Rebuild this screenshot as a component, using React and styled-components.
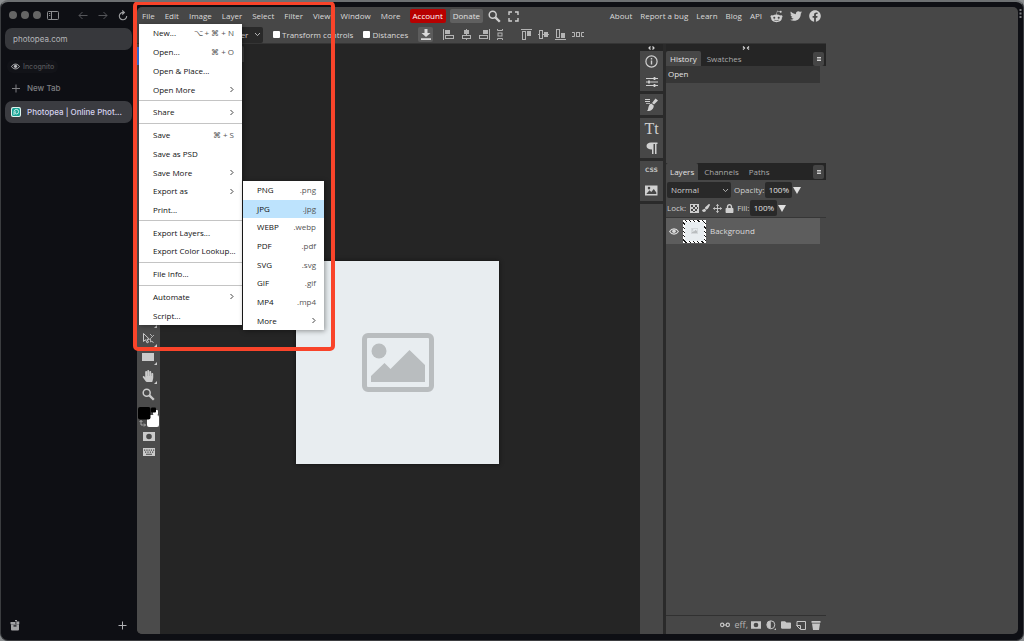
import React from 'react';
import styled, { createGlobalStyle } from 'styled-components';
import { FaTwitter, FaFacebook, FaRedditAlien, FaHandPaper, FaLock, FaFolder, FaPaintBrush } from 'react-icons/fa';


const GlobalStyle = createGlobalStyle`
    * { box-sizing: border-box; }
    html, body { margin: 0; background: #8b8e90; }
    body { font: 8px/12px "Open Sans", "Noto Sans", sans-serif; color: #dadada; }
    button, input, select { font: inherit; color: inherit; margin: 0; padding: 0; border: 0; background: none; }
    a { color: inherit; text-decoration: none; }
    ul { list-style: none; margin: 0; padding: 0; }
    svg { display: block; flex: none; }
`;


// BROWSER

const Browser = styled.div`
    position: relative;
    display: flex;
    height: 100vh;
    min-height: 500px;
    padding: 5px 5px 6px 0;
    border: 1px solid #3b3d40;
    border-top: 2px solid #6d7072;
    border-radius: 8px;
    background: #0e0f14;
    overflow: hidden;
`;

const Sidebar = styled.aside`
    display: flex;
    flex-direction: column;
    flex: none;
    width: 136px;
    padding: 0 5px 0 4px;
    font: 8px/12px Inter, "Liberation Sans", sans-serif;
    color: #8b8c8f;
`;

const WindowBar = styled.div`
    display: flex;
    align-items: center;
    height: 16px;
    margin-bottom: 5px;
    padding-left: 4px;
`;

const Lights = styled.div`
    display: flex;
    gap: 4px;
    margin-right: 6px;

    i {
        width: 8px;
        height: 8px;
        border-radius: 50%;
        background: #656565;
    }
`;

const IconButton = styled.button`
    display: grid;
    place-items: center;
    flex: none;
    width: 12px;
    height: 12px;
    margin-left: ${(p) => p.$ml || 0}px;
    color: ${(p) => p.$color || 'inherit'};
`;

const Address = styled.input`
    width: 100%;
    height: 22px;
    padding: 0 8px;
    border-radius: 7px;
    background: #37383c;
    color: #b4b5b8;
`;

const Incognito = styled.div`
    display: flex;
    align-items: center;
    align-self: flex-start;
    gap: 3px;
    height: 13px;
    margin: 10px 0 0 2px;
    padding: 0 4px;
    border-radius: 6px;
    background: #121318;
    color: #55565a;
    font-size: 7px;
    font-weight: 500;
`;

const TabButton = styled.button`
    display: flex;
    align-items: center;
    gap: 6px;
    height: 22px;
    margin-top: ${(p) => (p.$active ? 2 : 4)}px;
    padding: 0 6px;
    border-radius: 7px;
    background: ${(p) => (p.$active ? '#3b3c41' : 'none')};
    color: ${(p) => (p.$active ? '#d5d2ee' : '#7e7f82')};
    font-weight: 500;
    text-align: left;
    white-space: nowrap;

    > svg { min-width: 10px; }
`;

const SidebarFoot = styled.div`
    display: flex;
    justify-content: space-between;
    margin-top: auto;
    padding: 0 4px 3px 4px;
`;

const Tint = styled.span`
    color: ${(p) => p.$color};
`;

const WindowDots = styled.button`
    position: absolute;
    top: 7px;
    right: 1px;
    color: #7b7c7f;
`;


// EDITOR SHELL

const Editor = styled.div`
    position: relative;
    display: flex;
    flex: 1;
    border-radius: 5px;
    background: #474747;
`;

const Workspace = styled.main`
    display: flex;
    flex-direction: column;
    flex: 1;
    min-width: 0;
`;

const AdColumn = styled.div`
    flex: none;
    width: 192px;
`;

const MenuBar = styled.nav`
    display: flex;
    align-items: center;
    height: 18px;
    padding: 0 5px;
    white-space: nowrap;
`;

const MenuGroup = styled.div`
    display: flex;
    gap: 10px;
    margin-right: 9px;
`;

const LinkGroup = styled.div`
    display: flex;
    gap: 8px;
    margin: 0 8px 0 auto;
`;

const Pill = styled.button`
    height: 14px;
    margin-right: 4px;
    padding: 0 3px;
    border-radius: 2px;
    background: ${(p) => p.$bg};
    color: ${(p) => p.$color};
`;

const IconSet = styled.div`
    display: flex;
    align-items: center;
    gap: ${(p) => p.$gap}px;
    margin-left: ${(p) => p.$ml || 0}px;
    color: ${(p) => (p.$dim ? '#b4b4b4' : '#cfcfcf')};
`;

const OptionsBar = styled.div`
    display: flex;
    align-items: center;
    height: 19px;
    padding: 1px 5px 0 66px;
    border-bottom: 1px solid #353535;
`;

const SelectBox = styled.span`
    display: grid;
    align-items: center;
    width: ${(p) => p.$w}px;
    height: 16px;
    border-radius: 2px;
    background: #292929;

    select, svg { grid-area: 1 / 1; }
    svg { justify-self: end; margin-right: 2px; pointer-events: none; }
    select { width: 100%; padding-left: ${(p) => p.$pl || 4}px; appearance: none; }
`;

const Check = styled.label`
    display: flex;
    align-items: center;
    gap: 2px;
    margin-left: 10px;
    white-space: nowrap;

    input {
        width: 7px;
        height: 7px;
        border-radius: 1px;
        background: #fff;
        appearance: none;
    }
`;

const RaisedButton = styled.button`
    display: grid;
    place-items: center;
    width: 15px;
    height: 15px;
    margin: 0 10px;
    border-radius: 2px;
    background: #5c5c5c;
`;

const Body = styled.div`
    display: flex;
    flex: 1;
    min-height: 0;
`;


// TOOLBAR

const Toolbar = styled.div`
    display: flex;
    flex-direction: column;
    flex: none;
    width: 23px;
    padding-top: 3px;
    background: #4b4b4b;
    border-bottom-left-radius: 5px;
`;

const ToolGroup = styled.div`
    display: grid;
    grid-auto-rows: 1fr;
    height: ${(p) => p.$h}px;
`;

const Tool = styled.button`
    display: grid;
    place-items: center;
    width: 100%;
    height: ${(p) => (p.$h ? `${p.$h}px` : 'auto')};
    background: ${(p) => (p.$active ? '#3474e0' : 'none')};
    color: #cbcbcb;
`;


// CANVAS

const CanvasArea = styled.section`
    flex: 1;
    min-width: 0;
    background: #252525;
`;

const DocTabs = styled.div`
    display: flex;
    height: 18px;
`;

const DocTab = styled.button`
    width: 84px;
    margin: 2px 0 0;
    border-radius: 0 2px 0 0;
    background: #3c3c3c;
`;

const Stage = styled.div`
    display: flex;
    justify-content: center;
    padding: 199px 5px 0 0;
`;

const Sheet = styled.div`
    display: grid;
    place-items: center;
    width: 203px;
    height: 203px;
    background: #e8edf0;
    box-shadow: 0 0 4px #111;
`;


// PANELS

const Dock = styled.section`
    display: flex;
    flex-direction: column;
    flex: none;
    width: ${(p) => p.$w}px;
    border-right: ${(p) => (p.$edge ? '3px solid #2a2a2a' : 0)};
`;

const DockHandle = styled.div`
    display: grid;
    place-items: center;
    height: 7px;
    background: #252525;
`;

const DockGroup = styled.div`
    display: flex;
    flex-direction: column;
    align-items: center;
    justify-content: space-around;
    height: ${(p) => (p.$h ? `${p.$h}px` : 'auto')};
    flex: ${(p) => (p.$h ? 'none' : 1)};
    border-bottom: ${(p) => (p.$h ? '3px solid #2a2a2a' : 0)};
    color: #d0d0d0;
`;

const GlyphText = styled.span`
    font: 16px/16px "Liberation Serif", serif;
`;

const CssText = styled.span`
    font: bold 6px/8px "DejaVu Sans", sans-serif;
    color: #bdbdbd;
`;

const Panel = styled.div`
    display: flex;
    flex-direction: column;
    flex: ${(p) => (p.$h ? 'none' : 1)};
    height: ${(p) => (p.$h ? `${p.$h}px` : 'auto')};
    min-height: 0;
`;

const PanelTabs = styled.div`
    display: flex;
    align-items: stretch;
    flex: none;
    height: ${(p) => p.$h}px;
    margin-bottom: ${(p) => p.$mb || 0}px;
    padding-right: 2px;
    background: #252525;
`;

const PanelTab = styled.button`
    padding: 0 4px;
    margin-right: 2px;
    border-radius: 2px 2px 0 0;
    background: ${(p) => (p.$active ? '#474747' : 'none')};
    color: ${(p) => (p.$active ? '#e4e4e4' : '#a9a9a9')};
`;

const PanelMenu = styled.button`
    display: grid;
    place-items: center;
    align-self: center;
    width: 11px;
    height: 14px;
    margin-left: auto;
    border-radius: 2px;
    background: #454545;
    color: #ddd;
`;

const HistoryRow = styled.div`
    height: 17px;
    margin-right: 6px;
    padding: 2px;
    background: #363636;
    color: #e4e4e4;
`;

const Controls = styled.div`
    display: flex;
    align-items: center;
    gap: 3px;
    height: 18px;
    padding-left: 1px;
    color: #cfcfcf;
`;

const Percent = styled.input`
    width: 27px;
    height: 16px;
    margin-left: -2px;
    padding-bottom: 1px;
    border-radius: 2px;
    background: #292929;
    color: #e4e4e4;
    text-align: center;
`;

const Drop = styled.button`
    width: 7px;
    margin-left: -2px;
    border: 4px solid transparent;
    border-top: 7px solid #e0e0e0;
    border-bottom: 0;
`;

const LayerList = styled.div`
    border-top: 1px solid #363636;
`;

const LayerRow = styled.div`
    display: flex;
    align-items: center;
    gap: 4px;
    height: 26px;
    margin-right: 6px;
    padding-left: 3px;
    background: #5d5d5d;
    color: #dcdcdc;
`;

const Thumb = styled.span`
    display: grid;
    place-items: center;
    width: 23px;
    height: 23px;
    border: 2px solid transparent;
    background:
        linear-gradient(#e8edf0, #e8edf0) padding-box,
        repeating-linear-gradient(45deg, #fff 0 2px, #151515 2px 3px) border-box;
`;

const LayerFoot = styled.div`
    display: flex;
    align-items: center;
    justify-content: flex-end;
    gap: 5px;
    height: 19px;
    margin-top: auto;
    padding-right: 5px;
    border-top: 1px solid #313131;
    color: #c6c6c6;
`;

const EffText = styled.span`
    margin-right: -2px;
    font-size: 9px;
    color: #b5b5b5;
`;


// FILE MENU

const MenuList = styled.ul`
    position: absolute;
    z-index: 2;
    display: flex;
    flex-direction: column;
    background: #fff;
    color: #111;
    box-shadow: 1px 1px 5px rgba(0, 0, 0, 0.4);
`;

const FileMenu = styled(MenuList)`
    left: 2px;
    top: 17px;
    width: 103px;
    height: 301px;
`;

const ExportMenu = styled(MenuList)`
    left: 104px;
    top: -1px;
    width: 81px;
    height: 149px;
`;

const MenuRow = styled.li`
    position: relative;
    display: flex;
    flex: 1;
    background: ${(p) => (p.$active ? '#bde3fd' : 'none')};

    > button {
        display: flex;
        flex: 1;
        align-items: center;
        justify-content: space-between;
        padding: 0 8px 0 14px;
        white-space: nowrap;
    }

    kbd { font: inherit; color: #555; }
`;

const Divider = styled.li`
    height: 1px;
    margin: 1px 0 2px;
    background: #c4c4c4;
`;

const Highlight = styled.div`
    position: absolute;
    z-index: 3;
    left: 132px;
    top: -1px;
    width: 202px;
    height: 350px;
    border: 4px solid #f9442a;
    border-radius: 5px;
    pointer-events: none;
`;


// ICONS

const Svg = ({ w = 12, h = 12, box, fill, children }) => (
    <svg
        width={w}
        height={h}
        viewBox={box || `0 0 ${w} ${h}`}
        fill={fill ? 'currentColor' : 'none'}
        stroke={fill ? 'none' : 'currentColor'}
        aria-hidden="true"
    >
        {children}
    </svg>
);

const Chevron = () => <Svg w={5} h={7}><path d="M1.5 1l2.5 2.5L1.5 6" strokeWidth="0.8" /></Svg>;
const ChevronDown = () => <Svg w={7} h={5}><path d="M1 1l2.5 2.6L6 1" strokeWidth="0.8" /></Svg>;
const Plus = () => <Svg w={9} h={9}><path d="M4.5 0.5v8M0.5 4.5h8" /></Svg>;
const Lines = () => <Svg w={4} h={4}><path d="M0 0.5h4M0 2h4M0 3.5h4" strokeWidth="0.9" /></Svg>;

const Eye = ({ w = 10 }) => (
    <Svg w={w} h={7} box="0 0 10 7">
        <path d="M0.6 3.5C2.8 0 7.2 0 9.4 3.5C7.2 7 2.8 7 0.6 3.5z" strokeWidth="1.1" />
        <circle cx="5" cy="3.3" r="1.8" fill="currentColor" stroke="none" />
    </Svg>
);

const Magnifier = () => (
    <Svg w={13} h={13}>
        <circle cx="4.7" cy="4.7" r="3.5" strokeWidth="1.5" />
        <path d="M7.4 7.4l4.4 4.4" strokeWidth="2.3" />
    </Svg>
);

const Picture = ({ w, h }) => (
    <Svg w={w} h={h} box="0 0 72 59">
        <rect x="2.5" y="2.5" width="67" height="54" rx="3.5" strokeWidth="5" />
        <circle cx="17" cy="18" r="7.5" fill="currentColor" stroke="none" />
        <path d="M9 49V43L22.5 30L28.5 36L47.5 17L63 32V49z" fill="currentColor" stroke="none" />
    </Svg>
);

const Mask = ({ w = 12, h = 9 }) => (
    <Svg w={w} h={h} box="0 0 12 9" fill>
        <path fillRule="evenodd" d="M0 0H12V9H0zM6 1.7A2.8 2.8 0 1 0 6 7.3A2.8 2.8 0 1 0 6 1.7z" />
    </Svg>
);

const alignShapes = [
    [11, <><path d="M0.5 0v11" /><rect x="2.5" y="6.5" width="8" height="3" /><path d="M2 3h5" strokeWidth="4" /></>],
    [11, <><path d="M5.5 0v11" /><rect x="1.5" y="6.5" width="8" height="3" fill="#474747" /><path d="M3 3h5" strokeWidth="4" /></>],
    [11, <><path d="M10.5 0v11" /><rect x="0.5" y="6.5" width="8" height="3" /><path d="M4 3h5" strokeWidth="4" /></>],
    [6, <><path d="M0.5 0v1.5h5V0M0.5 11V9.5h5V11" /><rect x="1" y="4" width="4" height="3" /></>],
    [11, <><path d="M0 0.5h11" /><rect x="1.5" y="2.5" width="3" height="8" /><path d="M8 2v5" strokeWidth="4" /></>],
    [11, <><path d="M0 5.5h11" /><rect x="1.5" y="1.5" width="3" height="8" fill="#474747" /><path d="M8 3v5" strokeWidth="4" /></>],
    [11, <><path d="M0 10.5h11" /><rect x="1.5" y="0.5" width="3" height="8" /><path d="M8 4v5" strokeWidth="4" /></>],
    [12, <><path d="M0 3.5h2.5v4H0M12 3.5H9.5v4H12" /><rect x="4.5" y="3.5" width="3" height="4" /></>],
];


// DATA

const fileItems = [
    { label: 'New...', keys: '⌥ + ⌘ + N' },
    { label: 'Open...', keys: '⌘ + O' },
    { label: 'Open & Place...' },
    { label: 'Open More', more: true },
    null,
    { label: 'Share', more: true },
    null,
    { label: 'Save', keys: '⌘ + S' },
    { label: 'Save as PSD' },
    { label: 'Save More', more: true },
    { label: 'Export as', more: true, submenu: true },
    { label: 'Print...' },
    null,
    { label: 'Export Layers...' },
    { label: 'Export Color Lookup...' },
    null,
    { label: 'File Info...' },
    null,
    { label: 'Automate', more: true },
    { label: 'Script...' },
];

const formats = ['PNG', 'JPG', 'WEBP', 'PDF', 'SVG', 'GIF', 'MP4'];
const menus = ['File', 'Edit', 'Image', 'Layer', 'Select', 'Filter', 'View', 'Window', 'More'];
const links = ['About', 'Report a bug', 'Learn', 'Blog', 'API'];


const BrowserSidebar = () => (
    <Sidebar>
        <WindowBar>
            <Lights><i /><i /><i /></Lights>
            <IconButton aria-label="Toggle sidebar">
                <Svg w={12} h={9}><rect x="0.5" y="0.5" width="11" height="8" rx="1" /><path d="M4.5 1v7M2 2.5h1.2M2 4.5h1.2" /></Svg>
            </IconButton>
            <IconButton $ml={18} $color="#55565a" aria-label="Back">
                <Svg w={10} h={9}><path d="M9.5 4.5H1M4.5 1L1 4.5L4.5 8" /></Svg>
            </IconButton>
            <IconButton $ml={8} $color="#55565a" aria-label="Forward">
                <Svg w={10} h={9}><path d="M0.5 4.5H9M5.5 1L9 4.5L5.5 8" /></Svg>
            </IconButton>
            <IconButton $ml={8} $color="#a0a1a4" aria-label="Reload">
                <Svg w={10} h={11}><path d="M6 2.5A3.7 3.7 0 1 0 8.7 6M4.2 0.5L6.4 2.5L4.2 4.5" strokeWidth="1.1" /></Svg>
            </IconButton>
        </WindowBar>
        <Address aria-label="Address" defaultValue="photopea.com" />
        <Incognito><Tint $color="#b9babd"><Eye w={9} /></Tint>Incognito</Incognito>
        <TabButton><Plus />New Tab</TabButton>
        <TabButton $active>
            <Svg w={10} h={10}>
                <rect width="10" height="10" rx="2" fill="#dff5f0" stroke="none" />
                <rect x="1" y="1" width="8" height="8" rx="1.5" fill="#18a497" stroke="none" />
                <path d="M3 8V4.8A2.3 2.3 0 1 1 5.2 7A1.2 1.2 0 0 1 5.2 4.6" stroke="#dff5f0" strokeWidth="0.9" />
            </Svg>
            Photopea | Online Phot...
        </TabButton>
        <SidebarFoot>
            <IconButton $color="#a3a4a6" aria-label="Library">
                <Svg w={10} h={11} fill>
                    <path d="M1 4.5h8v5a1 1 0 0 1-1 1H2a1 1 0 0 1-1-1zM0.5 2h5v2.2h-5zM6.3 1.5h3v2.7h-3zM5 0h2v1.2H5z" />
                    <path d="M3.5 5h3v1.8h-3z" fill="#3a3b3f" />
                </Svg>
            </IconButton>
            <IconButton $color="#b0b1b4" aria-label="New tab"><Plus /></IconButton>
        </SidebarFoot>
    </Sidebar>
);


const TopMenu = () => (
    <MenuBar>
        <MenuGroup>
            {menus.map((name) => <button key={name}>{name}</button>)}
        </MenuGroup>
        <Pill $bg="#b70000" $color="#fff">Account</Pill>
        <Pill $bg="#606060" $color="#e0e0e0">Donate</Pill>
        <IconSet $gap={7} $ml={1}>
            <Magnifier />
            <Svg w={11} h={11}><path d="M1 4V1h3M7 1h3v3M10 7v3H7M4 10H1V7" strokeWidth="1.4" /></Svg>
        </IconSet>
        <LinkGroup>
            {links.map((name) => <a key={name} href="#">{name}</a>)}
        </LinkGroup>
        <IconSet $gap={7}>
            <FaRedditAlien size={13} />
            <FaTwitter size={12} />
            <FaFacebook size={12} />
        </IconSet>
    </MenuBar>
);


const ToolOptions = () => (
    <OptionsBar>
        <SelectBox $w={60} $pl={25}>
            <select aria-label="Target" defaultValue="Layer"><option>Layer</option></select>
            <ChevronDown />
        </SelectBox>
        <Check><input type="checkbox" />Transform controls</Check>
        <Check><input type="checkbox" />Distances</Check>
        <RaisedButton aria-label="Download">
            <Svg w={10} h={11} fill><path d="M3.5 0h3v4H9.5L5 8L0.5 4H3.5zM0 9.3h10V11H0z" /></Svg>
        </RaisedButton>
        <IconSet $gap={7} $dim>
            {alignShapes.slice(0, 4).map(([w, shape], i) => <Svg key={i} w={w} h={11}>{shape}</Svg>)}
        </IconSet>
        <IconSet $gap={6} $ml={18} $dim>
            {alignShapes.slice(4).map(([w, shape], i) => <Svg key={i} w={w} h={11}>{shape}</Svg>)}
        </IconSet>
    </OptionsBar>
);


const ToolColumn = () => {
    const corner = <path d="M17 14v3h-3z" fill="currentColor" stroke="none" />;

    return (
        <Toolbar>
            <Tool $active $h={18} aria-label="Move" />
            <ToolGroup $h={246} />
            <ToolGroup $h={93}>
                <Tool aria-label="Type"><Svg w={18} h={18}>{corner}</Svg></Tool>
                <Tool aria-label="Path select">
                    <Svg w={18} h={18}>
                        <path d="M3.5 3.5v8l2-1.8l1.6 3.2l1.4-0.7L7 9.3h2.5z" />
                        <path d="M10 4l2 2M14 5l-3.5 3.5v3.5l1.5-1l1.5 2" strokeWidth="0.8" />
                        {corner}
                    </Svg>
                </Tool>
                <Tool aria-label="Rectangle">
                    <Svg w={18} h={18}><rect x="2" y="5" width="12" height="8" fill="currentColor" stroke="none" />{corner}</Svg>
                </Tool>
                <Tool aria-label="Hand">
                    <Svg w={18} h={18}><FaHandPaper x={2} y={3} size={12} stroke="none" />{corner}</Svg>
                </Tool>
                <Tool aria-label="Zoom"><Magnifier /></Tool>
            </ToolGroup>
            <Tool $h={26} aria-label="Colors">
                <Svg w={21} h={22}>
                    <rect x="9" y="9" width="12" height="12" rx="2" fill="#fff" stroke="none" />
                    <rect x="15" y="4" width="5" height="5" rx="1" fill="#fff" stroke="none" />
                    <rect x="13" y="1.5" width="5" height="5" rx="1" fill="#000" stroke="none" />
                    <rect x="0" y="1" width="12.5" height="12.5" rx="2" fill="#000" stroke="none" />
                    <path d="M3 14.5v4.5h4.5M1.5 16L3 14.5l1.5 1.5M6 17.5l1.5 1.5L6 20.5" strokeWidth="0.7" />
                </Svg>
            </Tool>
            <Tool $h={13} aria-label="Quick mask"><Mask /></Tool>
            <Tool $h={17} aria-label="Keyboard">
                <Svg w={12} h={8} fill>
                    <path fillRule="evenodd" d="M0 0H12V8H0zM1 1.5V2.7H2.3V1.5zM3.3 1.5V2.7H4.6V1.5zM5.6 1.5V2.7H6.8V1.5zM7.8 1.5V2.7H9V1.5zM10 1.5V2.7H11.2V1.5zM2 3.6V4.7H3.2V3.6zM4.4 3.6V4.7H5.6V3.6zM6.8 3.6V4.7H8V3.6zM9 3.6V4.7H10.2V3.6zM3 5.7V6.8H9V5.7z" />
                </Svg>
            </Tool>
        </Toolbar>
    );
};


const IconDock = () => (
    <Dock $w={26} $edge>
        <DockHandle><Svg w={7} h={4}><path d="M2.5 0.5L1 2l1.5 1.5M4.5 0.5L6 2L4.5 3.5" strokeWidth="1.2" /></Svg></DockHandle>
        <DockGroup $h={43}>
            <Svg w={13} h={13}>
                <circle cx="6.5" cy="6.5" r="5.6" strokeWidth="1.2" />
                <path d="M6.5 5.5v4M6.5 3v1.4" strokeWidth="1.4" />
            </Svg>
            <Svg w={12} h={10}><path d="M0 1.5h12M0 5h12M0 8.5h12" /><path d="M8.5 0v3M3 3.5v3M8.5 7v3" strokeWidth="1.8" /></Svg>
        </DockGroup>
        <DockGroup $h={24}>
            <Svg w={13} h={14} fill>
                <path d="M0 1h5v1H0zM0 3h5v1H0zM1 5h4v0.8H1zM10.5 0.5L13 2.5L9 6.5L7 5zM6.2 5.5l2.5 2C9 11 5.5 13.5 2 13C4 11.5 2.5 7 6.2 5.5z" />
            </Svg>
        </DockGroup>
        <DockGroup $h={43}>
            <GlyphText>Tt</GlyphText>
            <Svg w={12} h={13} fill><path d="M5 0.5h6.5V2H10.5v10H9V2H7.5v10H6V7.5C2.5 7.5 0.5 6 0.5 4S2.5 0.5 5 0.5z" /></Svg>
        </DockGroup>
        <DockGroup $h={43}>
            <CssText>CSS</CssText>
            <Svg w={13} h={11} fill>
                <path fillRule="evenodd" d="M0 0.5H12.5V10.5H0zM1.3 9L4.5 5.2L6.3 7L8.8 4L11.3 7.5V9zM4 1.8A1.3 1.3 0 1 0 4 4.4A1.3 1.3 0 1 0 4 1.8z" />
            </Svg>
        </DockGroup>
        <DockGroup />
    </Dock>
);


const Panels = () => (
    <Dock $w={160}>
        <DockHandle><Svg w={8} h={4}><path d="M1 0.5L2.5 2L1 3.5M7 0.5L5.5 2L7 3.5" strokeWidth="1.2" /></Svg></DockHandle>
        <Panel $h={112}>
            <PanelTabs $h={15}>
                <PanelTab $active>History</PanelTab>
                <PanelTab>Swatches</PanelTab>
                <PanelMenu aria-label="History menu"><Lines /></PanelMenu>
            </PanelTabs>
            <HistoryRow>Open</HistoryRow>
        </Panel>
        <Panel>
            <PanelTabs $h={17} $mb={1}>
                <PanelTab $active>Layers</PanelTab>
                <PanelTab>Channels</PanelTab>
                <PanelTab>Paths</PanelTab>
                <PanelMenu aria-label="Layers menu"><Lines /></PanelMenu>
            </PanelTabs>
            <Controls>
                <SelectBox $w={64}>
                    <select aria-label="Blend mode" defaultValue="Normal"><option>Normal</option></select>
                    <ChevronDown />
                </SelectBox>
                <label htmlFor="opacity">Opacity:</label>
                <Percent id="opacity" defaultValue="100%" />
                <Drop aria-label="Opacity slider" />
            </Controls>
            <Controls>
                <span>Lock:</span>
                <IconSet $gap={3} $ml={1}>
                    <Svg w={9} h={9} fill>
                        <path fillRule="evenodd" d="M0 0H9V9H0zM3 1H1V3H3zM7 1H5V3H7zM5 3H3V5H5zM8 3H7V5H8zM3 5H1V7H3zM7 5H5V7H7zM5 7H3V8H5z" />
                    </Svg>
                    <FaPaintBrush size={8} />
                    <Svg w={9} h={9}><path d="M4.5 0.5v8M0.5 4.5h8M3.2 1.7L4.5 0.5l1.3 1.2M3.2 7.3l1.3 1.2l1.3-1.2M1.7 3.2L0.5 4.5l1.2 1.3M7.3 3.2l1.2 1.3l-1.2 1.3" strokeWidth="0.9" /></Svg>
                    <FaLock size={9} />
                </IconSet>
                <label htmlFor="fill">Fill:</label>
                <Percent id="fill" defaultValue="100%" />
                <Drop aria-label="Fill slider" />
            </Controls>
            <LayerList>
                <LayerRow>
                    <Eye w={10} />
                    <Thumb><Tint $color="#b9bdbf"><Picture w={7} h={6} /></Tint></Thumb>
                    Background
                </LayerRow>
            </LayerList>
            <LayerFoot>
                <Svg w={10} h={6}>
                    <rect x="0.6" y="1.2" width="3.2" height="3.4" rx="1.5" strokeWidth="1.2" />
                    <rect x="6.2" y="1.2" width="3.2" height="3.4" rx="1.5" strokeWidth="1.2" />
                    <path d="M3.5 3h3" />
                </Svg>
                <EffText>eff,</EffText>
                <Mask w={10} h={8} />
                <Svg w={10} h={10}><circle cx="4.8" cy="4.8" r="4" /><path d="M4.8 1A3.8 3.8 0 0 0 4.8 8.6zM10 8v2H8z" fill="currentColor" stroke="none" /></Svg>
                <FaFolder size={10} />
                <Svg w={10} h={9}><path d="M1 4V0.5h8.5v8H5M0.5 4.5h4v4z" /></Svg>
                <Svg w={10} h={9} fill><path d="M0.5 0h9v1.8h-9zM1 2.4h8L8 9H2z" /></Svg>
            </LayerFoot>
        </Panel>
    </Dock>
);


const FileMenuPopup = () => (
    <FileMenu>
        {fileItems.map((item, idx) => {
            if (!item) return <Divider key={idx} />;
            return (
                <MenuRow key={item.label}>
                    <button>
                        {item.label}
                        {item.keys && <kbd>{item.keys}</kbd>}
                        {item.more && <Chevron />}
                    </button>
                    {item.submenu && (
                        <ExportMenu>
                            {formats.map((name) => (
                                <MenuRow key={name} $active={name === 'JPG'}>
                                    <button>{name}<kbd>.{name.toLowerCase()}</kbd></button>
                                </MenuRow>
                            ))}
                            <MenuRow><button>More<Chevron /></button></MenuRow>
                        </ExportMenu>
                    )}
                </MenuRow>
            );
        })}
    </FileMenu>
);


const App = () => (
    <>
        <GlobalStyle />
        <Browser>
            <BrowserSidebar />
            <Editor>
                <Workspace>
                    <TopMenu />
                    <ToolOptions />
                    <Body>
                        <ToolColumn />
                        <CanvasArea>
                            <DocTabs><DocTab aria-label="Open document" /></DocTabs>
                            <Stage>
                                <Sheet><Tint $color="#b9bdbf"><Picture w={72} h={59} /></Tint></Sheet>
                            </Stage>
                        </CanvasArea>
                        <IconDock />
                        <Panels />
                    </Body>
                </Workspace>
                <AdColumn />
                <FileMenuPopup />
            </Editor>
            <WindowDots aria-label="Window menu">
                <Svg w={3} h={10} fill><path d="M0.5 0h2v2h-2zM0.5 3.5h2v2h-2zM0.5 7h2v2h-2z" /></Svg>
            </WindowDots>
            <Highlight />
        </Browser>
    </>
);


export default App;
